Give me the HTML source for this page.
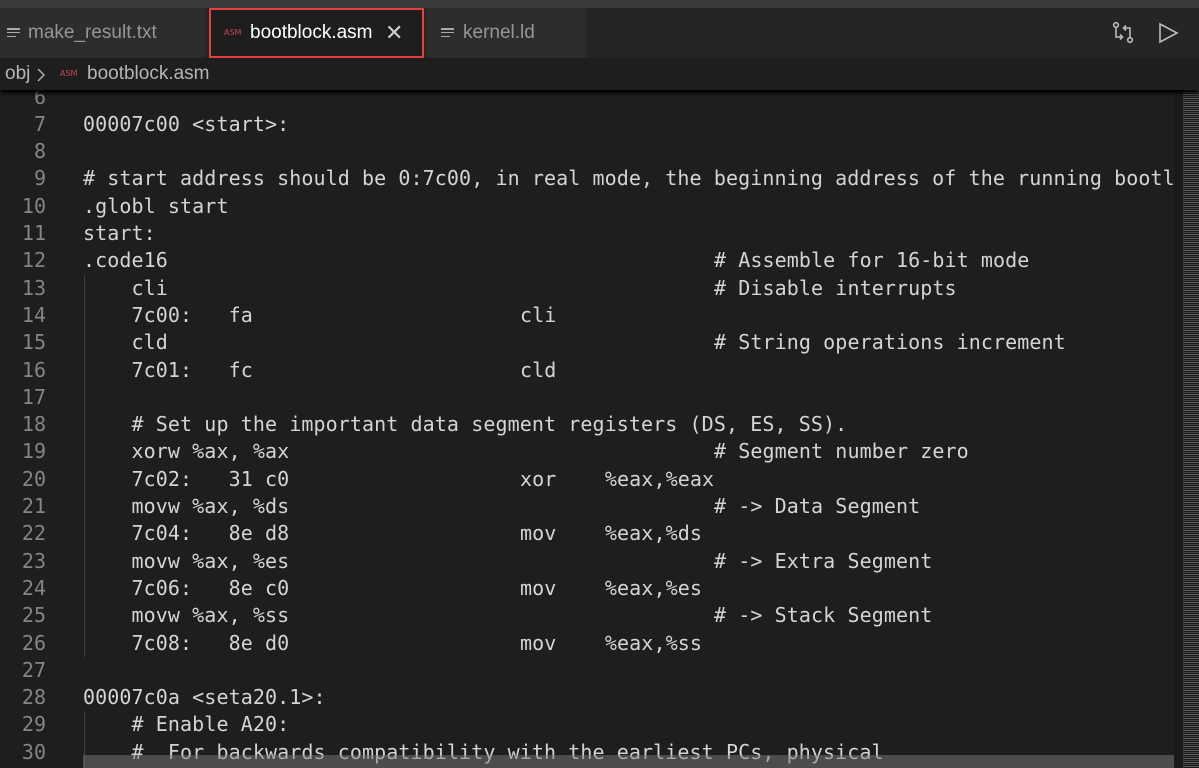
<!DOCTYPE html>
<html><head><meta charset="utf-8"><style>
*{margin:0;padding:0;box-sizing:border-box}
body{width:1199px;height:768px;overflow:hidden;background:#1e1e1e;position:relative;font-family:"Liberation Sans","DejaVu Sans",sans-serif}
.top{position:absolute;left:0;top:0;width:1199px;height:8px;background:#3a3a3a}
.bar{position:absolute;left:0;top:8px;width:1199px;height:50px;background:#252526}
.tab{position:absolute;top:8px;height:50px;background:#2d2d2d;color:#969696;font-size:19px;line-height:50px}
.tab.act{background:#1e1e1e;color:#fff;border:2px solid #e8403f;line-height:46px}
.lines{position:absolute;width:13px;height:12px}
.lines i{display:block;height:1.6px;background:#aaa;margin-bottom:2.2px}
.asm{font-size:8px;color:#c94a4a;font-family:"DejaVu Sans",sans-serif}
.crumb{position:absolute;top:58px;left:0;width:1199px;height:32px;background:#1e1e1e;color:#b5b5b5;font-size:19px;line-height:32px;box-shadow:0 3px 4px #000;z-index:2}
.ed{position:absolute;left:0;top:90px;width:1174px;height:678px;overflow:hidden;font-family:"DejaVu Sans Mono","Liberation Mono",monospace;font-size:20px;color:#d4d4d4;letter-spacing:0.09px}
.ln{position:absolute;left:0;width:46px;text-align:right;color:#858585;height:27.3px;line-height:27.3px;letter-spacing:0}
.l{position:absolute;left:83px;height:27.3px;line-height:27.3px;white-space:pre;width:1100px}
.l span{position:absolute;top:0}
.c52{left:631px}.c36{left:437px}
.g{position:absolute;left:84px;width:1px;background:#404040}
.mm{position:absolute;left:1183px;top:90px;width:16px;height:678px;background:repeating-linear-gradient(180deg,#777 0 1px,#1e1e1e 1px 2px,#555 2px 3px,#1e1e1e 3px 4px);opacity:.7}
</style></head><body>
<div class="top"></div>
<div class="bar"></div>
<div class="tab" style="left:0;width:205px"><div class="lines" style="left:7px;top:20px"><i></i><i></i><i style="width:9px"></i></div><span style="position:absolute;left:28px">make_result.txt</span></div>
<div class="tab act" style="left:209px;width:215px"><span class="asm" style="position:absolute;left:13px;top:0">ASM</span><span style="position:absolute;left:39px">bootblock.asm</span><span style="position:absolute;left:174px;font-size:22px;color:#ccc">✕</span></div>
<div class="tab" style="left:426px;width:160px"><div class="lines" style="left:15px;top:20px"><i></i><i></i><i style="width:9px"></i></div><span style="position:absolute;left:37px">kernel.ld</span></div>
<svg style="position:absolute;left:1112px;top:21px" width="22" height="24" viewBox="0 0 22 24" fill="none" stroke="#bbb" stroke-width="1.6"><circle cx="4" cy="4" r="2.3"/><circle cx="18" cy="19" r="2.3"/><path d="M4 6.5V16h6M8 13.5l2.5 2.5L8 18.5M18 16.5V7h-6M14 4.5L11.5 7 14 9.5"/></svg>
<svg style="position:absolute;left:1158px;top:22px" width="22" height="22" viewBox="0 0 22 22" fill="none" stroke="#bbb" stroke-width="1.6"><path d="M2 2L19 11 2 20Z"/></svg>
<div class="crumb"><span style="position:absolute;left:5px">obj</span><svg style="position:absolute;left:37px;top:10px" width="8" height="14" viewBox="0 0 8 14" fill="none" stroke="#b5b5b5" stroke-width="1.4"><path d="M1 1l6 6-6 6"/></svg><span class="asm" style="position:absolute;left:60px;top:0">ASM</span><span style="position:absolute;left:87px">bootblock.asm</span></div>
<div class="ed">
<div class="g" style="top:184.6px;height:382px"></div>
<div class="g" style="top:621.4px;height:80px"></div>
<div class="ln" style="top:-6.5px">6</div>
<div class="ln" style="top:20.8px">7</div><div class="l" style="top:20.8px">00007c00 &lt;start&gt;:</div>
<div class="ln" style="top:48.1px">8</div>
<div class="ln" style="top:75.4px">9</div><div class="l" style="top:75.4px"># start address should be 0:7c00, in real mode, the beginning address of the running bootloader</div>
<div class="ln" style="top:102.7px">10</div><div class="l" style="top:102.7px">.globl start</div>
<div class="ln" style="top:130px">11</div><div class="l" style="top:130px">start:</div>
<div class="ln" style="top:157.3px">12</div><div class="l" style="top:157.3px">.code16<span class="c52"># Assemble for 16-bit mode</span></div>
<div class="ln" style="top:184.6px">13</div><div class="l" style="top:184.6px">    cli<span class="c52"># Disable interrupts</span></div>
<div class="ln" style="top:211.9px">14</div><div class="l" style="top:211.9px">    7c00:   fa<span class="c36">cli</span></div>
<div class="ln" style="top:239.2px">15</div><div class="l" style="top:239.2px">    cld<span class="c52"># String operations increment</span></div>
<div class="ln" style="top:266.5px">16</div><div class="l" style="top:266.5px">    7c01:   fc<span class="c36">cld</span></div>
<div class="ln" style="top:293.8px">17</div>
<div class="ln" style="top:321.1px">18</div><div class="l" style="top:321.1px">    # Set up the important data segment registers (DS, ES, SS).</div>
<div class="ln" style="top:348.4px">19</div><div class="l" style="top:348.4px">    xorw %ax, %ax<span class="c52"># Segment number zero</span></div>
<div class="ln" style="top:375.7px">20</div><div class="l" style="top:375.7px">    7c02:   31 c0<span class="c36">xor    %eax,%eax</span></div>
<div class="ln" style="top:403px">21</div><div class="l" style="top:403px">    movw %ax, %ds<span class="c52"># -&gt; Data Segment</span></div>
<div class="ln" style="top:430.3px">22</div><div class="l" style="top:430.3px">    7c04:   8e d8<span class="c36">mov    %eax,%ds</span></div>
<div class="ln" style="top:457.6px">23</div><div class="l" style="top:457.6px">    movw %ax, %es<span class="c52"># -&gt; Extra Segment</span></div>
<div class="ln" style="top:484.9px">24</div><div class="l" style="top:484.9px">    7c06:   8e c0<span class="c36">mov    %eax,%es</span></div>
<div class="ln" style="top:512.2px">25</div><div class="l" style="top:512.2px">    movw %ax, %ss<span class="c52"># -&gt; Stack Segment</span></div>
<div class="ln" style="top:539.5px">26</div><div class="l" style="top:539.5px">    7c08:   8e d0<span class="c36">mov    %eax,%ss</span></div>
<div class="ln" style="top:566.8px">27</div>
<div class="ln" style="top:594.1px">28</div><div class="l" style="top:594.1px">00007c0a &lt;seta20.1&gt;:</div>
<div class="ln" style="top:621.4px">29</div><div class="l" style="top:621.4px">    # Enable A20:</div>
<div class="ln" style="top:648.7px">30</div><div class="l" style="top:648.7px">    #  For backwards compatibility with the earliest PCs, physical</div>
<div style="position:absolute;left:83px;top:665px;width:1092px;height:13px;background:rgba(121,121,121,.5)"></div>
</div>
<div style="position:absolute;left:1174px;top:90px;width:9px;height:678px;background:#1a1a1a"></div>
<div class="mm"></div>
</body></html>
